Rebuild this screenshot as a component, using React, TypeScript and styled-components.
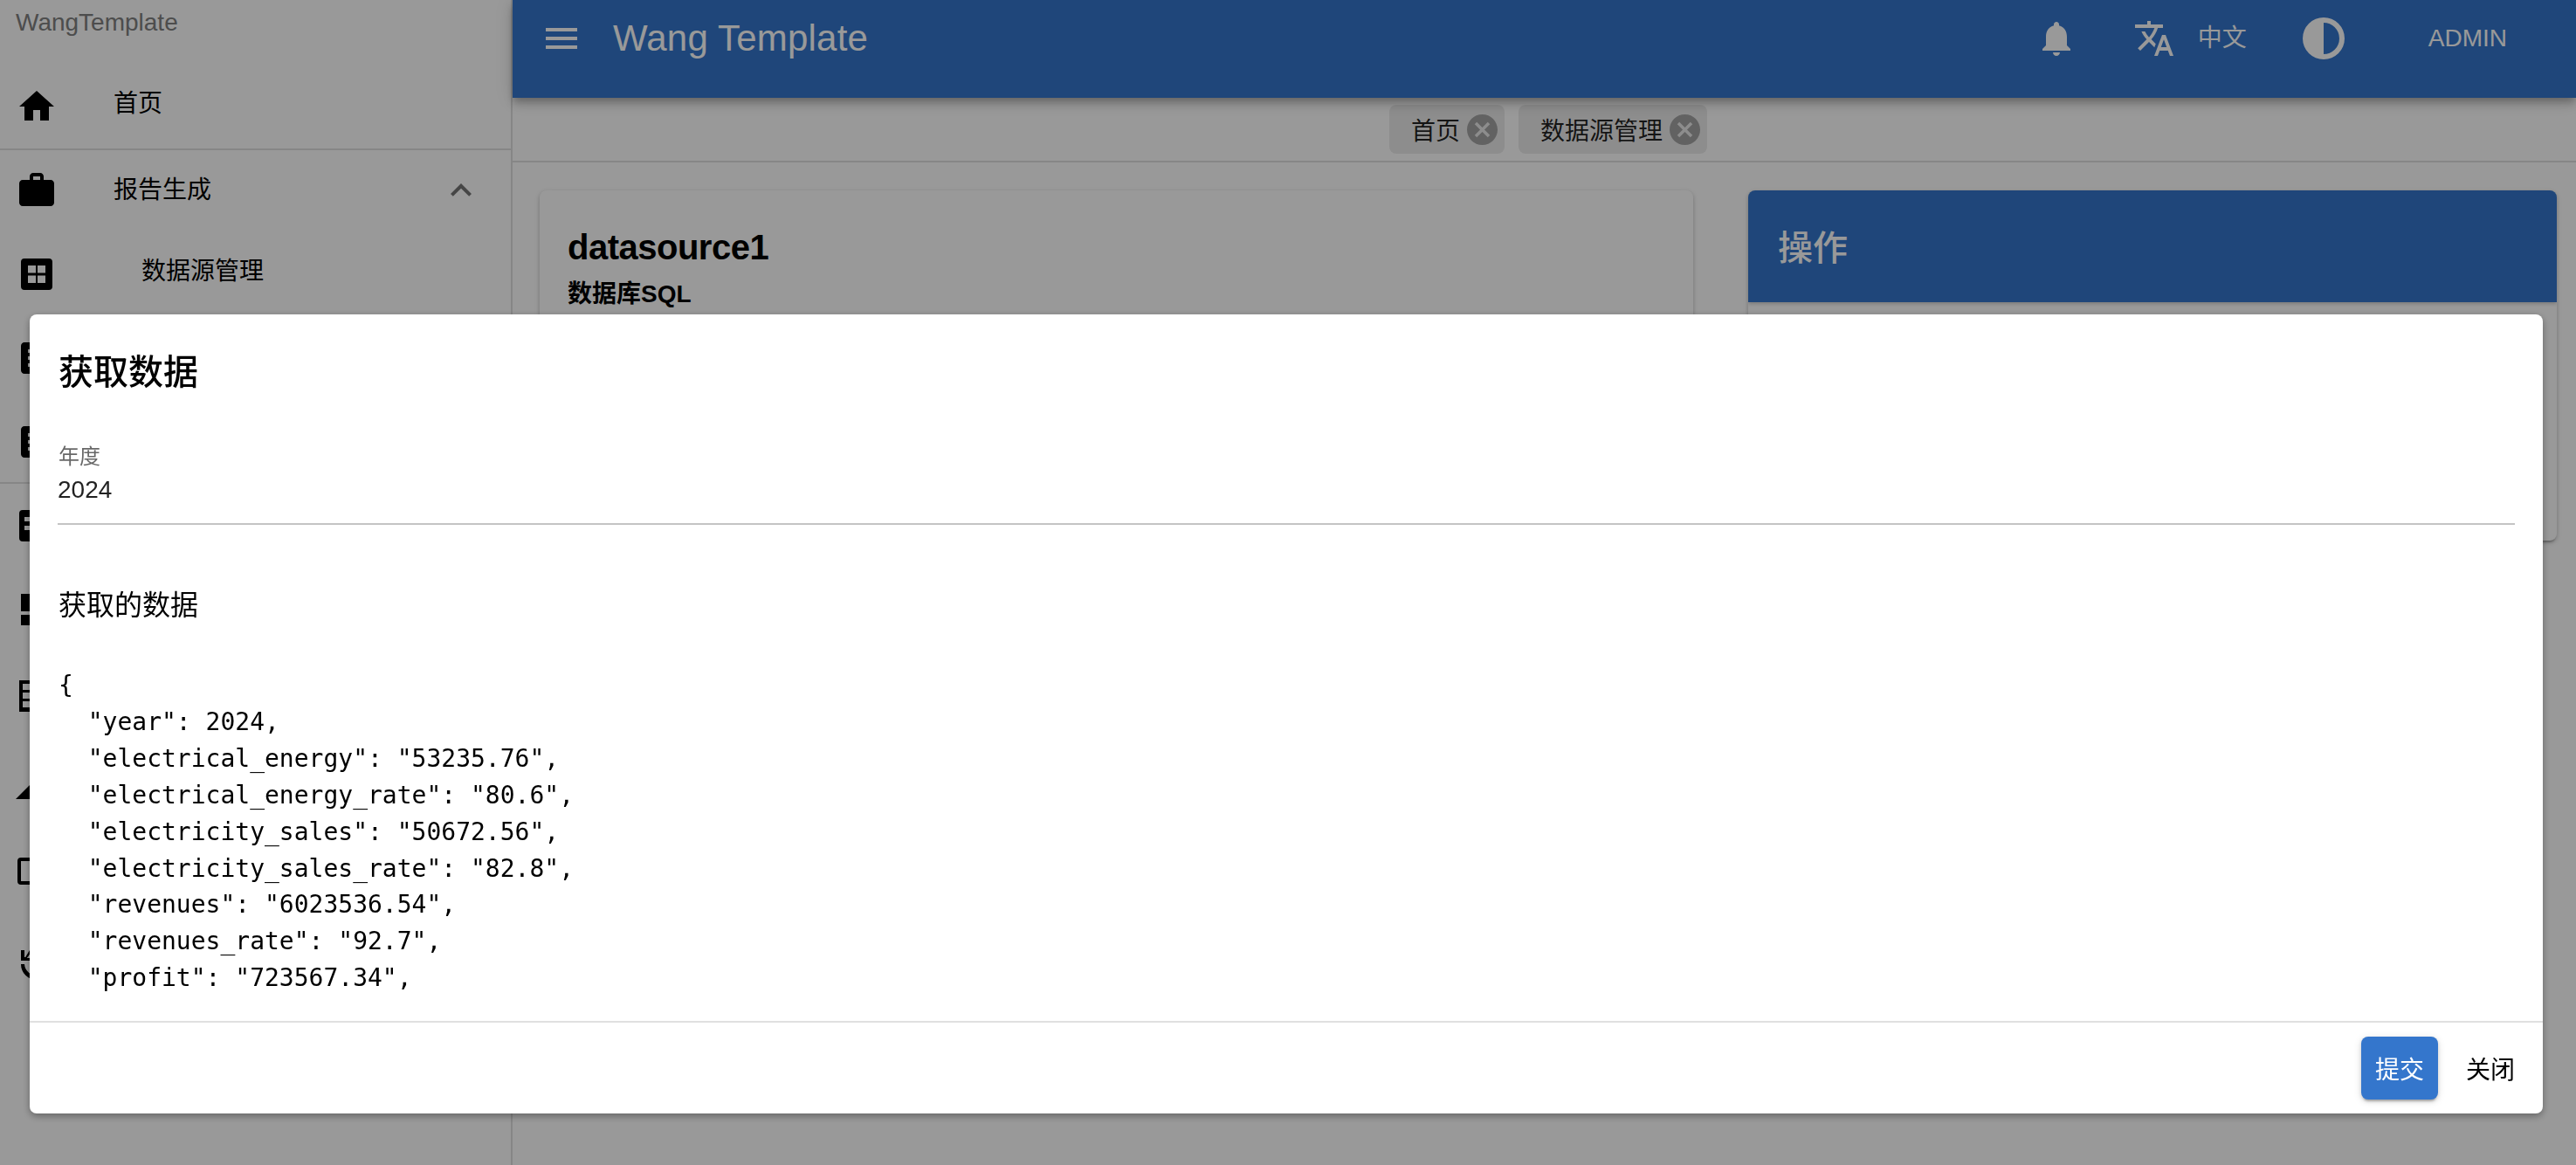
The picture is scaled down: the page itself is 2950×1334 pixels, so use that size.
import React from "react";
import styled, { createGlobalStyle } from "styled-components";

const SANS = `"Liberation Sans", "Noto Sans CJK SC", sans-serif`;
const PRIMARY = "#3476cc";

const GlobalStyle = createGlobalStyle`
  html, body {
    margin: 0;
    padding: 0;
    height: 1334px;
    overflow: hidden;
    background: #fff;
    font-family: ${SANS};
  }
`;

const Page = styled.div`
  display: flex;
  width: 2950px;
  height: 1334px;
  overflow: hidden;
  background: #fff;
`;

const Sidebar = styled.aside`
  display: flex;
  flex-direction: column;
  flex: 0 0 587px;
  box-sizing: border-box;
  border-right: 2px solid rgba(0, 0, 0, 0.12);
`;

const Brand = styled.div`
  height: 50px;
  padding-left: 18px;
  font-size: 28px;
  line-height: 51px;
  color: #808080;
`;

const NavRow = styled.div<{ $gap: number }>`
  display: flex;
  align-items: center;
  flex: 0 0 48px;
  margin-top: ${(p) => p.$gap}px;
  padding: 0 33px 0 18px;
`;

const NavLabel = styled.span<{ $indent?: number; $lift?: boolean }>`
  margin-left: ${(p) => p.$indent ?? 64}px;
  margin-bottom: ${(p) => (p.$lift ? 6 : 0)}px;
  font-size: 28px;
  line-height: 36px;
  color: #000;
`;

const NavDivider = styled.div<{ $gap: number }>`
  flex: 0 0 2px;
  margin-top: ${(p) => p.$gap}px;
  background: rgba(0, 0, 0, 0.12);
`;

const Chevron = styled.svg`
  width: 48px;
  height: 48px;
  margin-left: auto;
  fill: rgba(0, 0, 0, 0.54);
`;

const Glyph = styled.svg`
  display: block;
  flex: 0 0 48px;
  width: 48px;
  height: 48px;
  fill: currentColor;
`;

const Main = styled.div`
  display: flex;
  flex-direction: column;
  flex: 1;
  min-width: 0;
`;

const AppBar = styled.header`
  position: relative;
  z-index: 2;
  display: flex;
  align-items: center;
  flex: 0 0 112px;
  box-sizing: border-box;
  height: 112px;
  padding: 0 79px 24px 32px;
  color: #fff;
  background: ${PRIMARY};
  box-shadow: 0 4px 8px -2px rgba(0, 0, 0, 0.2), 0 8px 10px 0 rgba(0, 0, 0, 0.14),
    0 2px 20px 0 rgba(0, 0, 0, 0.12);
`;

const AppTitle = styled.h1`
  margin: 0 0 0 35px;
  font-size: 42px;
  font-weight: 400;
  line-height: 48px;
  letter-spacing: 0.2px;
`;

const BarSlot = styled.div<{ $left?: number; $auto?: boolean }>`
  display: flex;
  align-items: center;
  margin-left: ${(p) => (p.$auto ? "auto" : `${p.$left ?? 0}px`)};
  font-size: 28px;
  line-height: 48px;
`;

const TabStrip = styled.nav`
  display: flex;
  justify-content: center;
  gap: 16px;
  flex: 0 0 74px;
  box-sizing: border-box;
  padding: 8px 0 0 9px;
  border-bottom: 2px solid rgba(0, 0, 0, 0.12);
`;

const Tab = styled.div`
  display: flex;
  align-items: center;
  gap: 8px;
  box-sizing: border-box;
  height: 56px;
  padding: 0 8px 0 25px;
  border-radius: 8px;
  font-size: 28px;
  color: rgba(0, 0, 0, 0.87);
  background: rgba(0, 0, 0, 0.08);
`;

const TabClose = styled.svg`
  width: 35px;
  height: 35px;
  color: rgba(0, 0, 0, 0.3);
`;

const Content = styled.div`
  display: flex;
  align-items: flex-start;
  gap: 63px;
  padding: 32px 0 0 31px;
`;

const Card = styled.section<{ $width: number }>`
  flex: 0 0 ${(p) => p.$width}px;
  height: 401px;
  border-radius: 8px;
  overflow: hidden;
  background: #fff;
  box-shadow: 0 4px 2px -2px rgba(0, 0, 0, 0.2), 0 2px 4px 0 rgba(0, 0, 0, 0.14),
    0 2px 6px 0 rgba(0, 0, 0, 0.12);
`;

const CardBody = styled.div`
  padding: 44px 32px 0;
`;

const CardTitle = styled.h2`
  margin: 0;
  font-size: 40px;
  font-weight: 700;
  line-height: 42px;
  letter-spacing: -0.5px;
  color: #000;
`;

const CardSubtitle = styled.div`
  margin-top: 13px;
  font-size: 28px;
  font-weight: 700;
  line-height: 40px;
  color: #000;
`;

const CardHeader = styled.div`
  display: flex;
  align-items: center;
  box-sizing: border-box;
  height: 128px;
  padding: 0 0 3px 34px;
  font-size: 40px;
  font-weight: 500;
  color: #fff;
  background: ${PRIMARY};
  box-shadow: 0 2px 4px rgba(0, 0, 0, 0.2);
`;

const Backdrop = styled.div`
  position: fixed;
  inset: 0;
  z-index: 10;
  display: flex;
  align-items: flex-start;
  padding: 360px 0 0 34px;
  background: rgba(0, 0, 0, 0.4);
`;

const Dialog = styled.div`
  display: flex;
  flex-direction: column;
  width: 2878px;
  height: 915px;
  border-radius: 8px;
  background: #fff;
  box-shadow: 0 3px 8px rgba(0, 0, 0, 0.35);
`;

const DialogTitle = styled.h2`
  flex: 0 0 132px;
  box-sizing: border-box;
  margin: 0;
  padding: 38px 33px 0;
  font-size: 40px;
  font-weight: 500;
  line-height: 56px;
  color: #000;
`;

const DialogContent = styled.div`
  flex: 1;
  min-height: 0;
  overflow: hidden;
  padding: 0 32px;
`;

const Field = styled.div`
  box-sizing: border-box;
  height: 109px;
  padding-top: 16px;
  border-bottom: 2px solid #c4c4c4;
`;

const FieldLabel = styled.div`
  padding-left: 1px;
  font-size: 24px;
  line-height: 30px;
  color: rgba(0, 0, 0, 0.6);
`;

const FieldValue = styled.div`
  margin-top: 7px;
  font-size: 28px;
  line-height: 32px;
  color: rgba(0, 0, 0, 0.87);
`;

const SectionTitle = styled.div`
  margin-top: 68px;
  padding-left: 1px;
  font-size: 32px;
  line-height: 48px;
  color: #000;
`;

const JsonBlock = styled.pre`
  margin: 47px 0 0 1px;
  font-family: "DejaVu Sans Mono", "Liberation Mono", monospace;
  font-size: 28px;
  line-height: 41.9px;
  color: #000;
`;

const DialogFooter = styled.footer`
  display: flex;
  align-items: center;
  justify-content: flex-end;
  gap: 16px;
  flex: 0 0 106px;
  box-sizing: border-box;
  padding: 0 16px 0 0;
  border-top: 2px solid #e0e0e0;
`;

const ActionButton = styled.button<{ $primary?: boolean }>`
  box-sizing: border-box;
  width: 88px;
  height: 72px;
  padding: 0;
  border: 0;
  border-radius: 8px;
  font-family: ${SANS};
  font-size: 28px;
  color: ${(p) => (p.$primary ? "#fff" : "#000")};
  background: ${(p) => (p.$primary ? PRIMARY : "transparent")};
  box-shadow: ${(p) =>
    p.$primary
      ? "0 4px 2px -2px rgba(0,0,0,.2), 0 2px 4px 0 rgba(0,0,0,.14), 0 2px 10px 0 rgba(0,0,0,.12)"
      : "none"};
`;

const ICONS = {
  home: "M10 20v-6h4v6h5v-8h3L12 3 2 12h3v8z",
  work: "M20 6h-4V4c0-1.11-.89-2-2-2h-4c-1.11 0-2 .89-2 2v2H4c-1.11 0-1.99.89-1.99 2L2 19c0 1.11.89 2 2 2h16c1.11 0 2-.89 2-2V8c0-1.11-.89-2-2-2zm-6 0h-4V4h4v2z",
  grid: "M5 3h14a2 2 0 0 1 2 2v14a2 2 0 0 1-2 2H5a2 2 0 0 1-2-2V5a2 2 0 0 1 2-2zM7 7v4.2h4.5V7zM12.5 7v4.2H17V7zM7 12.8V17h4.5v-4.2zM12.5 12.8V17H17v-4.2z",
  article:
    "M19 3H5c-1.1 0-2 .9-2 2v14c0 1.1.9 2 2 2h14c1.1 0 2-.9 2-2V5c0-1.1-.9-2-2-2zm-5 14H7v-2h7v2zm3-4H7v-2h10v2zm0-4H7V7h10v2z",
  feed: "M4 3h16a2 2 0 0 1 2 2v14a2 2 0 0 1-2 2H4a2 2 0 0 1-2-2V5a2 2 0 0 1 2-2zM5 7v2.5h14V7zM5 12v2.5h14V12z",
  dashboard: "M3 13h8V3H3v10zm0 8h8v-6H3v6zm10 0h8V11h-8v10zm0-18v6h8V3h-8z",
  rows: "M2 3h20v2H4v3.5h18V10H4v3.5h18V15H4v3.5h18V21H2z",
  triangle: "M0 21 12 9l12 12z",
  frame: "M3 4h18a2 2 0 0 1 2 2v11.5a2 2 0 0 1-2 2H3a2 2 0 0 1-2-2V6a2 2 0 0 1 2-2zm0 2v11.5h18V6z",
  restore: "M3 4h2v4h.6L8 4l1 1-2.6 3.5H8V10H3zM3 12h2a7 7 0 0 0 7 6.5V21a9 9 0 0 1-9-9z",
  less: "M12 8l-6 6 1.41 1.41L12 10.83l4.59 4.58L18 14z",
  menu: "M3 18h18v-2H3v2zm0-5h18v-2H3v2zm0-7v2h18V6H3z",
  bell: "M12 22c1.1 0 2-.9 2-2h-4c0 1.1.89 2 2 2zm6-6v-5c0-3.07-1.64-5.64-4.5-6.32V4c0-.83-.67-1.5-1.5-1.5s-1.5.67-1.5 1.5v.68C7.63 5.36 6 7.92 6 11v5l-2 2v1h16v-1l-2-2z",
  translate:
    "m12.87 15.07-2.54-2.51.03-.03c1.74-1.94 2.98-4.17 3.71-6.53H17V4h-7V2H8v2H1v2h11.17C11.5 7.92 10.44 9.75 9 11.35 8.07 10.32 7.3 9.19 6.69 8h-2c.73 1.63 1.73 3.17 2.98 4.56l-5.09 5.02L4 19l5-5 3.11 3.11.76-2.04zM18.5 10h-2L12 22h2l1.12-3h4.75L21 22h2l-4.5-12zm-2.62 7 1.62-4.33L19.12 17h-3.24z",
  contrast: "M12 0a12 12 0 1 0 0 24 12 12 0 0 0 0-24zm0 3a9 9 0 0 1 0 18z",
  cancel:
    "M12 2C6.47 2 2 6.47 2 12s4.47 10 10 10 10-4.47 10-10S17.53 2 12 2zm5 13.59L15.59 17 12 13.41 8.41 17 7 15.59 10.59 12 7 8.41 8.41 7 12 10.59 15.59 7 17 8.41 13.41 12 17 15.59z",
};

function Icon({ d }: { d: string }) {
  return (
    <Glyph viewBox="0 0 24 24">
      <path fillRule="evenodd" d={d} />
    </Glyph>
  );
}

const JSON_TEXT = `{
  "year": 2024,
  "electrical_energy": "53235.76",
  "electrical_energy_rate": "80.6",
  "electricity_sales": "50672.56",
  "electricity_sales_rate": "82.8",
  "revenues": "6023536.54",
  "revenues_rate": "92.7",
  "profit": "723567.34",`;

// these rows sit behind the dialog, only the left edge of each icon shows
const HIDDEN_ROWS = [
  { icon: ICONS.article, gap: 48 },
  { icon: ICONS.article, gap: 48 },
  { divider: true, gap: 22 },
  { icon: ICONS.feed, gap: 24 },
  { icon: ICONS.dashboard, gap: 48 },
  { icon: ICONS.rows, gap: 51 },
  { icon: ICONS.triangle, gap: 52 },
  { icon: ICONS.frame, gap: 53 },
  { icon: ICONS.restore, gap: 58 },
];

export default function App() {
  return (
    <>
      <GlobalStyle />
      <Page>
        <Sidebar>
          <Brand>WangTemplate</Brand>
          <NavRow $gap={48}>
            <Icon d={ICONS.home} />
            <NavLabel $lift>首页</NavLabel>
          </NavRow>
          <NavDivider $gap={24} />
          <NavRow $gap={22}>
            <Icon d={ICONS.work} />
            <NavLabel>报告生成</NavLabel>
            <Chevron viewBox="0 0 24 24">
              <path d={ICONS.less} />
            </Chevron>
          </NavRow>
          <NavRow $gap={48}>
            <Icon d={ICONS.grid} />
            <NavLabel $indent={96} $lift>
              数据源管理
            </NavLabel>
          </NavRow>
          {HIDDEN_ROWS.map((row, i) =>
            row.divider ? (
              <NavDivider key={i} $gap={row.gap} />
            ) : (
              <NavRow key={i} $gap={row.gap}>
                <Icon d={row.icon as string} />
              </NavRow>
            )
          )}
        </Sidebar>
        <Main>
          <AppBar>
            <Icon d={ICONS.menu} />
            <AppTitle>Wang Template</AppTitle>
            <BarSlot $auto>
              <Icon d={ICONS.bell} />
            </BarSlot>
            <BarSlot $left={64}>
              <Icon d={ICONS.translate} />
            </BarSlot>
            <BarSlot $left={26}>中文</BarSlot>
            <BarSlot $left={64}>
              <Icon d={ICONS.contrast} />
            </BarSlot>
            <BarSlot $left={96}>ADMIN</BarSlot>
          </AppBar>
          <TabStrip>
            <Tab>
              首页
              <TabClose viewBox="2 2 20 20">
                <path fill="currentColor" d={ICONS.cancel} />
              </TabClose>
            </Tab>
            <Tab>
              数据源管理
              <TabClose viewBox="2 2 20 20">
                <path fill="currentColor" d={ICONS.cancel} />
              </TabClose>
            </Tab>
          </TabStrip>
          <Content>
            <Card $width={1321}>
              <CardBody>
                <CardTitle>datasource1</CardTitle>
                <CardSubtitle>数据库SQL</CardSubtitle>
              </CardBody>
            </Card>
            <Card $width={926}>
              <CardHeader>操作</CardHeader>
            </Card>
          </Content>
        </Main>
      </Page>
      <Backdrop>
        <Dialog>
          <DialogTitle>获取数据</DialogTitle>
          <DialogContent>
            <Field>
              <FieldLabel>年度</FieldLabel>
              <FieldValue>2024</FieldValue>
            </Field>
            <SectionTitle>获取的数据</SectionTitle>
            <JsonBlock>{JSON_TEXT}</JsonBlock>
          </DialogContent>
          <DialogFooter>
            <ActionButton $primary>提交</ActionButton>
            <ActionButton>关闭</ActionButton>
          </DialogFooter>
        </Dialog>
      </Backdrop>
    </>
  );
}
